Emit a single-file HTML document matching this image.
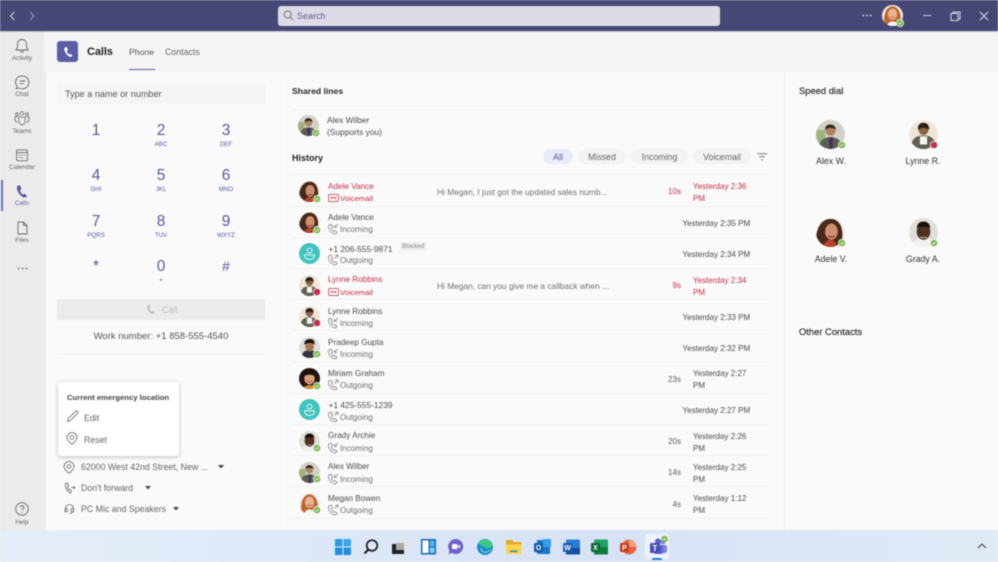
<!DOCTYPE html>
<html><head><meta charset="utf-8"><style>
html,body{margin:0;padding:0;width:998px;height:562px;overflow:hidden;background:#fafafa}
#r{position:relative;width:998px;height:562px;overflow:hidden;font-family:"Liberation Sans",sans-serif;color:#484644;filter:blur(.45px)}
#r div,#r svg{position:absolute}
.t{white-space:nowrap;line-height:12px;font-size:8.8px;height:12px;margin-top:1px}
.l{height:1px;background:#f2f2f2;left:292px;width:476px}
.n{font-size:8.2px;left:328px;color:#4c4c4c}
.s{font-size:8.1px;left:340px;color:#707070}
.s.red{font-size:7.7px}
.p{left:437px;font-size:8.35px;color:#707070}
.d{font-size:8.1px;width:30px;left:651px;text-align:right;color:#5c5c5c}
.y{left:682.5px;font-size:8.05px;color:#4c4c4c}
.y2{left:693px;font-size:8.05px;color:#4c4c4c}
.red{color:#c4314b}
.dg{font-size:15.5px;color:#5558a3;width:40px;text-align:center;line-height:18px;height:18px;margin-top:1px}
.lt{font-size:6.2px;color:#5558a3;width:40px;text-align:center;line-height:8px;height:8px;margin-top:1px}
.nav{font-size:6.4px;color:#666;width:44px;left:0;text-align:center;line-height:8px;height:8px;margin-top:1.5px}
.chip{height:15px;top:149px;border-radius:8px;background:#f3f3f3;font-size:8.8px;line-height:16px;text-align:center;color:#666}
.h{font-weight:bold;color:#252423;font-size:9px}
.sd{font-size:8.8px;width:70px;text-align:center;color:#333}
</style></head><body><div id="r">
<svg width="0" height="0" style="width:0;height:0"><defs>
<clipPath id="cc"><circle cx="16" cy="16" r="16"/></clipPath>
<symbol id="alex" viewBox="0 0 32 32"><g clip-path="url(#cc)"><rect width="32" height="32" fill="#cfd2c4"/><rect x="0" y="11" width="10" height="14" fill="#9fb27e"/><path d="M3 32c0-10 6-13 13-13s13 3 13 13z" fill="#5e5e58"/><path d="M14 19h5l-1 13h-3z" fill="#43325e"/><circle cx="16" cy="12" r="5.500" fill="#b08264"/><path d="M10 11c0-5 3-6 6-6s6 2 6 6c-3-3-9-3-12 0z" fill="#33261f"/></g></symbol>
<symbol id="adele" viewBox="0 0 32 32"><g clip-path="url(#cc)"><rect width="32" height="32" fill="#f5ece2"/><path d="M0 34C-2 12 6 1 16 1s14 10 13 20c0 5-2 9-4 13z" fill="#48291a"/><ellipse cx="17" cy="15" rx="7" ry="9" fill="#cd9070"/><path d="M8 32c1-6 5-8 8-8s6 2 8 8z" fill="#b5432c"/><path d="M13.500 20q3.500 2 7 0" stroke="#96333a" stroke-width="1.500" fill="none"/></g></symbol>
<symbol id="lynne" viewBox="0 0 32 32"><g clip-path="url(#cc)"><rect width="32" height="32" fill="#efe6d8"/><path d="M2 32c0-11 6-15 14-15s14 4 14 15z" fill="#5f5f54"/><path d="M12 18h8v10h-8z" fill="#f4f4f0"/><path d="M7 27h18v5H7z" fill="#5f5f54"/><circle cx="16" cy="11" r="5.500" fill="#8f6244"/><path d="M10 11c-1-6 3-8 6-8s7 2 6 8c-2-3-9-3-12 0z" fill="#2c2019"/></g></symbol>
<symbol id="pradeep" viewBox="0 0 32 32"><g clip-path="url(#cc)"><rect width="32" height="32" fill="#dedcd6"/><path d="M4 32c0-9 5-12 12-12s12 3 12 12z" fill="#33353a"/><ellipse cx="16" cy="14" rx="6.500" ry="8" fill="#a87350"/><path d="M8 12c0-7 4-9 9-9s7 3 7 9c-3-4-12-4-16 0z" fill="#15120f"/></g></symbol>
<symbol id="miriam" viewBox="0 0 32 32"><g clip-path="url(#cc)"><rect width="32" height="32" fill="#24160f"/><ellipse cx="16" cy="16" rx="8" ry="9" fill="#dba27c"/><path d="M6 14c1-8 6-10 10-10s9 3 10 10c-5-5-15-5-20 0z" fill="#1d120c"/><path d="M6 32c2-5 6-6 10-6s8 1 10 6z" fill="#d9903a"/><path d="M12.500 20q3.500 2 7 0" stroke="#b2423a" stroke-width="1.500" fill="none"/></g></symbol>
<symbol id="grady" viewBox="0 0 32 32"><g clip-path="url(#cc)"><rect width="32" height="32" fill="#dfdfda"/><path d="M4 32c0-8 5-10 12-10s12 2 12 10z" fill="#f0f0ee"/><ellipse cx="16" cy="15" rx="7.500" ry="9" fill="#4f3122"/><path d="M8.500 11c1-6 4-7 7.500-7s6.500 1 7.500 7c-4-2-11-2-15 0z" fill="#17100c"/><path d="M12.500 21q3.500 1.500 7 0" stroke="#e8d8d0" stroke-width="1" fill="none"/></g></symbol>
<symbol id="megan" viewBox="0 0 32 32"><g clip-path="url(#cc)"><rect width="32" height="32" fill="#f3efe8"/><path d="M4 30C1 14 7 2 16 2s15 12 12 28z" fill="#bd6530"/><ellipse cx="16" cy="14" rx="7" ry="8.500" fill="#e8b492"/><path d="M8 32c1-5 4-7 8-7s7 2 8 7z" fill="#f4f4f4"/><path d="M0 24l8 8H0z" fill="#eeb21e"/><path d="M12.500 18q3.500 2.500 7 0" stroke="#c0503c" stroke-width="1.300" fill="none"/></g></symbol>
<symbol id="tel" viewBox="0 0 32 32"><circle cx="16" cy="16" r="16" fill="#3fc4c0"/><circle cx="16" cy="11.500" r="3.700" fill="none" stroke="#fff" stroke-width="1.300"/><path d="M8.500 18h15c0 5-3 7-7.500 7s-7.500-2-7.500-7z" fill="none" stroke="#fff" stroke-width="1.300"/></symbol>
<symbol id="ok" viewBox="0 0 8 8"><circle cx="4" cy="4" r="4" fill="#fafafa"/><circle cx="4" cy="4" r="3.300" fill="#7fba50"/><path d="M2.500 4.100l1 1 2-2.100" stroke="#fff" stroke-width=".7" fill="none"/></symbol>
<symbol id="busy" viewBox="0 0 8 8"><circle cx="4" cy="4" r="4" fill="#fafafa"/><circle cx="4" cy="4" r="3.300" fill="#c4314b"/></symbol>
<symbol id="in" viewBox="0 0 12 12"><path d="M2.500 1.500C1 2.500 1 4 2.200 6.500S5.500 10.500 7.500 10.800c1.500.2 2.300-.6 2.500-1.600L7.800 7.600 6.600 8.300C5.400 7.500 4.600 6.200 4.300 4.800l1.200-.9L4.400 1.300z" fill="none" stroke="#858585" stroke-width=".8"/><path d="M11 1L7.500 4.500M7.500 2v2.500H10" fill="none" stroke="#858585" stroke-width=".8"/></symbol>
<symbol id="out" viewBox="0 0 12 12"><path d="M2.500 1.500C1 2.500 1 4 2.200 6.500S5.500 10.500 7.500 10.800c1.500.2 2.300-.6 2.500-1.600L7.800 7.600 6.600 8.300C5.400 7.500 4.600 6.200 4.300 4.800l1.200-.9L4.400 1.300z" fill="none" stroke="#858585" stroke-width=".8"/><path d="M7.500 4.500L11 1M8 1h3v3" fill="none" stroke="#858585" stroke-width=".8"/></symbol>
<symbol id="vm" viewBox="0 0 12 10"><rect x=".7" y="1.200" width="10.600" height="7.600" rx="1" fill="none" stroke="#c4314b" stroke-width=".8"/><path d="M3 4.200h6v1.800H7.500V5h-3v1H3z" fill="#c4314b"/></symbol>
<symbol id="ph" viewBox="0 0 16 16"><path d="M4.500 1.500C2.800 2.500 2.700 4.800 4.200 8s4 5.800 6.800 6.400c1.500.3 2.500-.5 2.900-1.700l-3-2.300-1.700.9C7.800 10.300 6.700 8.500 6.400 6.600l1.500-1.200L6.600 1.700z" fill="currentColor"/></symbol>
</defs></svg>

<!-- title bar -->
<div style="left:0;top:0;width:998px;height:31px;background:#464775"></div>
<div style="left:0;top:31px;width:998px;height:1px;background:#c8c8d8"></div>
<svg style="left:8px;top:11px" width="28" height="10" viewBox="0 0 28 10"><path d="M6.500 1L2.500 5l4 4" fill="none" stroke="#d8d8e8" stroke-width="1"/><path d="M22 1l4 4-4 4" fill="none" stroke="#9a9ab8" stroke-width="1"/></svg>
<div style="left:278px;top:6px;width:442px;height:20px;background:#dcdce6;border-radius:3px"></div>
<svg style="left:283px;top:10px" width="11" height="11" viewBox="0 0 11 11"><circle cx="4.700" cy="4.500" r="3.500" fill="none" stroke="#777" stroke-width="1"/><path d="M7.300 7.200l3 3" stroke="#777" stroke-width="1"/></svg>
<div class="t" style="left:297px;top:9px;font-size:9px;color:#5f5f90">Search</div>
<svg style="left:862px;top:14px" width="10" height="3"><circle cx="1.300" cy="1.500" r=".9" fill="#e8e8f0"/><circle cx="5" cy="1.500" r=".9" fill="#e8e8f0"/><circle cx="8.700" cy="1.500" r=".9" fill="#e8e8f0"/></svg>
<svg style="left:882px;top:5px" width="22" height="22"><use href="#megan" width="21" height="21"/></svg>
<svg style="left:896px;top:19px" width="8" height="8"><use href="#ok" width="8" height="8"/></svg>
<svg style="left:922px;top:11px" width="68" height="11" viewBox="0 0 68 11"><path d="M1 4.500h8.500" stroke="#c8c8dc" stroke-width="1"/><rect x="29" y="2.500" width="7" height="7" fill="none" stroke="#d8d8e8" stroke-width="1"/><path d="M31 2V1h7v7h-1.500" fill="none" stroke="#d8d8e8" stroke-width="1"/><path d="M58 1l8 8M66 1l-8 8" stroke="#d8d8e8" stroke-width="1"/></svg>

<!-- sidebar -->
<div style="left:0;top:32px;width:44px;height:498px;background:#ebebeb;box-shadow:1px 0 3px rgba(0,0,0,.1)"></div>
<div style="left:1px;top:180px;width:2px;height:31px;background:#7174b4"></div>
<svg style="left:14px;top:38px" width="16" height="16" viewBox="0 0 16 16" fill="none" stroke="#666" stroke-width=".9"><path d="M8 1.500c-3 0-4.500 2-4.500 4.500v3L2 12h12l-1.500-3V6c0-2.500-1.500-4.500-4.500-4.500zM6.300 13c.3 1.400 3.100 1.400 3.400 0"/></svg>
<div class="nav" style="top:53px">Activity</div>
<svg style="left:15px;top:75px" width="15" height="15" viewBox="0 0 15 15" fill="none" stroke="#666" stroke-width=".9"><path d="M7.500 1A6.300 6.300 0 0 1 7.500 13.800C6 13.800 4.800 13.500 3.800 13L1.200 13.700 2 11.200A6.300 6.300 0 0 1 7.500 1zM4.800 6h5.600M4.800 8.600h3.600"/></svg>
<div class="nav" style="top:89px">Chat</div>
<svg style="left:14px;top:111px" width="16" height="14" viewBox="0 0 16 14" fill="none" stroke="#666" stroke-width=".8"><circle cx="8" cy="2.200" r="1.700"/><circle cx="3" cy="3.200" r="1.400"/><circle cx="13" cy="3.200" r="1.400"/><path d="M4.800 6h6.400v4.500a3.200 3.200 0 0 1-6.400 0zM3.500 6H1v3c0 1.300 1 2.200 2.500 2.200M12.500 6H15v3c0 1.300-1 2.200-2.500 2.200"/></svg>
<div class="nav" style="top:126px">Teams</div>
<svg style="left:16px;top:149px" width="12" height="13" viewBox="0 0 12 13" fill="none" stroke="#666" stroke-width=".9"><rect x=".6" y=".8" width="10.800" height="11" rx="1.200"/><path d="M.6 3.600h10.800"/><path d="M3 6.300h1.200M5.400 6.300h1.200M7.800 6.300H9M3 8.600h1.200M5.400 8.600h1.200" stroke-width="1"/></svg>
<div class="nav" style="top:162px">Calendar</div>
<svg style="left:14px;top:184px;color:#5558a3" width="15" height="15"><use href="#ph" width="15" height="15"/></svg>
<div class="nav" style="top:198px;color:#6264a7">Calls</div>
<svg style="left:17px;top:221px" width="11" height="14" viewBox="0 0 11 14" fill="none" stroke="#666" stroke-width=".9"><path d="M1 1h5.500L10 4.500V13H1zM6.500 1v3.500H10"/></svg>
<div class="nav" style="top:235px">Files</div>
<svg style="left:17px;top:267px" width="11" height="3"><circle cx="1.500" cy="1.500" r=".9" fill="#666"/><circle cx="5.500" cy="1.500" r=".9" fill="#666"/><circle cx="9.500" cy="1.500" r=".9" fill="#666"/></svg>
<svg style="left:15px;top:502px" width="14" height="14" viewBox="0 0 14 14" fill="none" stroke="#666" stroke-width=".9"><circle cx="7" cy="7" r="6.300"/><path d="M5.200 5.400c0-2.300 3.700-2.300 3.700 0 0 1.500-1.900 1.500-1.900 3M7 10v.9"/></svg>
<div class="nav" style="top:517px">Help</div>

<!-- header -->
<div style="left:44px;top:32px;width:954px;height:40px;background:#f5f5f5"></div>
<div style="left:57px;top:41px;width:21px;height:21px;background:#5b5ea6;border-radius:3px"></div>
<svg style="left:62px;top:46px;color:#fff" width="12" height="12"><use href="#ph" width="12" height="12"/></svg>
<div class="t" style="left:87px;top:45px;font-size:11px;letter-spacing:-.1px;font-weight:bold;color:#252423">Calls</div>
<div class="t" style="left:129px;top:45px;font-size:8.7px;color:#555">Phone</div>
<div class="t" style="left:165px;top:45px;font-size:8.8px;color:#666">Contacts</div>
<div style="left:129px;top:69px;width:25.500px;height:1px;background:#5b5ea6"></div>

<!-- dial -->
<div style="left:57px;top:83px;width:208px;height:21px;background:#f5f5f5"></div>
<div class="t" style="left:65px;top:87px;font-size:9.100px;color:#555">Type a name or number</div>
<div class="dg" style="left:76px;top:121px">1</div>
<div class="dg" style="left:141px;top:121px">2</div><div class="lt" style="left:141px;top:140px">ABC</div>
<div class="dg" style="left:206px;top:121px">3</div><div class="lt" style="left:206px;top:140px">DEF</div>
<div class="dg" style="left:76px;top:166px">4</div><div class="lt" style="left:76px;top:185px">GHI</div>
<div class="dg" style="left:141px;top:166px">5</div><div class="lt" style="left:141px;top:185px">JKL</div>
<div class="dg" style="left:206px;top:166px">6</div><div class="lt" style="left:206px;top:185px">MNO</div>
<div class="dg" style="left:76px;top:212px">7</div><div class="lt" style="left:76px;top:231px">PQRS</div>
<div class="dg" style="left:141px;top:212px">8</div><div class="lt" style="left:141px;top:231px">TUV</div>
<div class="dg" style="left:206px;top:212px">9</div><div class="lt" style="left:206px;top:231px">WXYZ</div>
<div class="dg" style="left:76px;top:257px">*</div>
<div class="dg" style="left:141px;top:257px">0</div><div class="lt" style="left:141px;top:276px">+</div>
<div class="dg" style="left:206px;top:256px;font-size:14px">#</div>

<div style="left:57px;top:299px;width:208px;height:21px;background:#ebebeb"></div>
<svg style="left:145px;top:304px;color:#bdbdbd" width="11" height="11"><use href="#ph" width="11" height="11"/></svg>
<div class="t" style="left:162px;top:303px;font-size:9px;color:#bdbdbd">Call</div>
<div class="t" style="left:57px;width:208px;text-align:center;top:330px;font-size:9.500px;color:#555">Work number: +1 858-555-4540</div>
<div style="left:57px;top:354px;width:208px;height:1px;background:#f0f0f0"></div>

<!-- popup -->
<div style="left:58px;top:382px;width:121px;height:74px;background:#fff;border-radius:3px;box-shadow:0 1px 4px rgba(0,0,0,.25)"></div>
<div class="t" style="left:67px;top:390.5px;font-size:7.700px;font-weight:bold;color:#444">Current emergency location</div>
<svg style="left:66px;top:410px" width="13" height="13" viewBox="0 0 13 13" fill="none" stroke="#666" stroke-width=".8"><path d="M1.500 11.500l.8-3L9.500 1.300c.6-.6 1.400-.6 2 0s.6 1.400 0 2L4.400 10.500z"/></svg>
<div class="t" style="left:84px;top:410.5px;font-size:8.800px;color:#666">Edit</div>
<svg style="left:66px;top:432px" width="12" height="13" viewBox="0 0 12 13" fill="none" stroke="#666" stroke-width=".8"><path d="M6 12.300C3 10 1 8 1 5.500a5 5 0 0 1 10 0C11 8 9 10 6 12.300z"/><circle cx="6" cy="5.500" r="1.900"/></svg>
<div class="t" style="left:84px;top:432.5px;font-size:8.800px;color:#666">Reset</div>

<svg style="left:63px;top:461px" width="12" height="13" viewBox="0 0 12 13" fill="none" stroke="#666" stroke-width=".8"><path d="M6 12.300C3 10 1 8 1 5.500a5 5 0 0 1 10 0C11 8 9 10 6 12.300z"/><circle cx="6" cy="5.500" r="1.900"/></svg>
<div class="t" style="left:81px;top:460px;font-size:8.800px;color:#666">62000 West 42nd Street, New ...</div>
<svg style="left:218px;top:465px" width="6" height="4"><path d="M0 0h6L3 3.500z" fill="#444"/></svg>
<svg style="left:64px;top:482px" width="12" height="12" viewBox="0 0 12 12" fill="none" stroke="#666" stroke-width=".8"><path d="M2.500 1C1 2 1 3.800 2 6.200s3 4.500 4.500 4.800l1-2-1.700-1.500-.9.500C4.200 7 3.700 5.800 3.600 4.800l1-.7L3.800 1.300zM7 5.500h4M9.500 4l1.500 1.500L9.500 7"/></svg>
<div class="t" style="left:81px;top:481px;font-size:8.800px;color:#666">Don't forward</div>
<svg style="left:145px;top:486px" width="6" height="4"><path d="M0 0h6L3 3.500z" fill="#444"/></svg>
<svg style="left:64px;top:503px" width="11" height="12" viewBox="0 0 11 12" fill="none" stroke="#666" stroke-width=".8"><path d="M1.500 9V5.500a4 4 0 0 1 8 0V7c0 2-2 3.500-4 3.500"/><rect x="1" y="5.500" width="2.500" height="3.500" rx="1"/><rect x="7" y="5.500" width="2.500" height="3.500" rx="1"/></svg>
<div class="t" style="left:81px;top:502px;font-size:8.800px;color:#666">PC Mic and Speakers</div>
<svg style="left:173px;top:507px" width="6" height="4"><path d="M0 0h6L3 3.500z" fill="#444"/></svg>

<!-- middle -->
<div style="left:279px;top:72px;width:1px;height:458px;background:#f5f5f5"></div>
<div class="t h" style="left:292px;top:84px;font-size:8.600px">Shared lines</div>
<div class="l" style="top:109px"></div>
<svg style="left:298px;top:115px" width="21" height="21"><use href="#alex" width="21" height="21"/></svg>
<svg style="left:312px;top:129px" width="8" height="8"><use href="#ok" width="8" height="8"/></svg>
<div class="t n" style="left:327px;top:113px;font-size:8.400px">Alex Wilber</div>
<div class="t n" style="left:327px;top:125px;font-size:8.400px">(Supports you)</div>
<div class="t h" style="left:292px;top:150.5px">History</div>
<div class="chip" style="left:543px;width:30px;background:#e8ebfa;color:#5558a3">All</div>
<div class="chip" style="left:578px;width:48px">Missed</div>
<div class="chip" style="left:631px;width:57px">Incoming</div>
<div class="chip" style="left:693px;width:58px">Voicemail</div>
<svg style="left:757px;top:153px" width="10" height="8" viewBox="0 0 10 8" stroke="#666" stroke-width=".8"><path d="M0 .7h10M2 3.700h6M4 6.700h2"/></svg>

<div class="l" style="top:174px"></div>
<div class="l" style="top:206px"></div>
<div class="l" style="top:237px"></div>
<div class="l" style="top:268px"></div>
<div class="l" style="top:299px"></div>
<div class="l" style="top:330px"></div>
<div class="l" style="top:362px"></div>
<div class="l" style="top:393px"></div>
<div class="l" style="top:424px"></div>
<div class="l" style="top:455px"></div>
<div class="l" style="top:486px"></div>
<div class="l" style="top:518px"></div>

<!-- row 1 -->
<svg style="left:299px;top:181px" width="21" height="21"><use href="#adele" width="21" height="21"/></svg><svg style="left:313px;top:195px" width="8" height="8"><use href="#ok" width="8" height="8"/></svg>
<div class="t n red" style="top:180px">Adele Vance</div><svg style="left:328px;top:193px" width="11" height="10"><use href="#vm" width="11" height="10"/></svg><div class="t s red" style="top:192px">Voicemail</div>
<div class="t p" style="top:185px">Hi Megan, I just got the updated sales numb...</div>
<div class="t d red" style="top:185px">10s</div><div class="t y2 red" style="top:180px">Yesterday 2:36</div><div class="t y2 red" style="top:192px">PM</div>
<!-- row 2 -->
<svg style="left:299px;top:212px" width="21" height="21"><use href="#adele" width="21" height="21"/></svg><svg style="left:313px;top:226px" width="8" height="8"><use href="#ok" width="8" height="8"/></svg>
<div class="t n" style="top:211px">Adele Vance</div><svg style="left:327px;top:223px" width="12" height="12"><use href="#in" width="12" height="12"/></svg><div class="t s" style="top:223px">Incoming</div>
<div class="t y" style="top:217px">Yesterday 2:35 PM</div>
<!-- row 3 -->
<svg style="left:299px;top:243px" width="22" height="22"><use href="#tel" width="21" height="21"/></svg>
<div class="t n" style="top:242px;left:328.500px;font-size:8.400px">+1 206-555-9871</div><div style="left:400px;top:242px;width:27px;height:9px;background:#f0f0f0;border-radius:1px"></div><div class="t" style="left:402px;top:240px;font-size:6.300px;color:#888">Blocked</div>
<svg style="left:327px;top:254px" width="12" height="12"><use href="#out" width="12" height="12"/></svg><div class="t s" style="top:254px">Outgoing</div>
<div class="t y" style="top:248px">Yesterday 2:34 PM</div>
<!-- row 4 -->
<svg style="left:299px;top:275px" width="21" height="21"><use href="#lynne" width="21" height="21"/></svg><svg style="left:313px;top:288px" width="8" height="8"><use href="#busy" width="8" height="8"/></svg>
<div class="t n red" style="top:273px">Lynne Robbins</div><svg style="left:328px;top:287px" width="11" height="10"><use href="#vm" width="11" height="10"/></svg><div class="t s red" style="top:286px">Voicemail</div>
<div class="t p" style="top:279px">Hi Megan, can you give me a callback when ...</div>
<div class="t d red" style="top:279px">9s</div><div class="t y2 red" style="top:274px">Yesterday 2:34</div><div class="t y2 red" style="top:286px">PM</div>
<!-- row 5 -->
<svg style="left:299px;top:306px" width="21" height="21"><use href="#lynne" width="21" height="21"/></svg><svg style="left:313px;top:319px" width="8" height="8"><use href="#busy" width="8" height="8"/></svg>
<div class="t n" style="top:305px">Lynne Robbins</div><svg style="left:327px;top:317px" width="12" height="12"><use href="#in" width="12" height="12"/></svg><div class="t s" style="top:317px">Incoming</div>
<div class="t y" style="top:311px">Yesterday 2:33 PM</div>
<!-- row 6 -->
<svg style="left:299px;top:337px" width="21" height="21"><use href="#pradeep" width="21" height="21"/></svg><svg style="left:313px;top:350px" width="8" height="8"><use href="#ok" width="8" height="8"/></svg>
<div class="t n" style="top:336px">Pradeep Gupta</div><svg style="left:327px;top:348px" width="12" height="12"><use href="#in" width="12" height="12"/></svg><div class="t s" style="top:348px">Incoming</div>
<div class="t y" style="top:342px">Yesterday 2:32 PM</div>
<!-- row 7 -->
<svg style="left:299px;top:368px" width="21" height="21"><use href="#miriam" width="21" height="21"/></svg><svg style="left:313px;top:382px" width="8" height="8"><use href="#ok" width="8" height="8"/></svg>
<div class="t n" style="top:367px">Miriam Graham</div><svg style="left:327px;top:379px" width="12" height="12"><use href="#out" width="12" height="12"/></svg><div class="t s" style="top:379px">Outgoing</div>
<div class="t d" style="top:373px">23s</div><div class="t y2" style="top:367px">Yesterday 2:27</div><div class="t y2" style="top:379px">PM</div>
<!-- row 8 -->
<svg style="left:299px;top:399px" width="22" height="22"><use href="#tel" width="21" height="21"/></svg>
<div class="t n" style="top:398px;left:328.500px;font-size:8.400px">+1 425-555-1239</div><svg style="left:327px;top:411px" width="12" height="12"><use href="#out" width="12" height="12"/></svg><div class="t s" style="top:411px">Outgoing</div>
<div class="t y" style="top:404px">Yesterday 2:27 PM</div>
<!-- row 9 -->
<svg style="left:299px;top:431px" width="21" height="21"><use href="#grady" width="21" height="21"/></svg><svg style="left:313px;top:444px" width="8" height="8"><use href="#ok" width="8" height="8"/></svg>
<div class="t n" style="top:429px">Grady Archie</div><svg style="left:327px;top:442px" width="12" height="12"><use href="#in" width="12" height="12"/></svg><div class="t s" style="top:442px">Incoming</div>
<div class="t d" style="top:435px">20s</div><div class="t y2" style="top:430px">Yesterday 2:26</div><div class="t y2" style="top:442px">PM</div>
<!-- row 10 -->
<svg style="left:299px;top:462px" width="21" height="21"><use href="#alex" width="21" height="21"/></svg><svg style="left:313px;top:475px" width="8" height="8"><use href="#ok" width="8" height="8"/></svg>
<div class="t n" style="top:460px">Alex Wilber</div><svg style="left:327px;top:473px" width="12" height="12"><use href="#in" width="12" height="12"/></svg><div class="t s" style="top:473px">Incoming</div>
<div class="t d" style="top:466px">14s</div><div class="t y2" style="top:461px">Yesterday 2:25</div><div class="t y2" style="top:473px">PM</div>
<!-- row 11 -->
<svg style="left:299px;top:493px" width="21" height="21"><use href="#megan" width="21" height="21"/></svg><svg style="left:313px;top:506px" width="8" height="8"><use href="#ok" width="8" height="8"/></svg>
<div class="t n" style="top:492px">Megan Bowen</div><svg style="left:327px;top:504px" width="12" height="12"><use href="#out" width="12" height="12"/></svg><div class="t s" style="top:504px">Outgoing</div>
<div class="t d" style="top:498px">4s</div><div class="t y2" style="top:492px">Yesterday 1:12</div><div class="t y2" style="top:504px">PM</div>

<!-- right -->
<div style="left:784px;top:72px;width:1px;height:458px;background:#f0f0f0"></div>
<div class="t h" style="left:799px;top:83.5px;font-size:9.400px;font-weight:normal;color:#333;-webkit-text-stroke:.2px #333">Speed dial</div>
<svg style="left:816px;top:120px" width="29" height="29"><use href="#alex" width="29" height="29"/></svg><svg style="left:838px;top:141px" width="8" height="8"><use href="#ok" width="8" height="8"/></svg>
<svg style="left:909px;top:120px" width="29" height="29"><use href="#lynne" width="29" height="29"/></svg><svg style="left:930px;top:141px" width="8" height="8"><use href="#busy" width="8" height="8"/></svg>
<svg style="left:816px;top:218px" width="29" height="29"><use href="#adele" width="29" height="29"/></svg><svg style="left:838px;top:239px" width="8" height="8"><use href="#ok" width="8" height="8"/></svg>
<svg style="left:909px;top:218px" width="29" height="29"><use href="#grady" width="29" height="29"/></svg><svg style="left:930px;top:239px" width="8" height="8"><use href="#ok" width="8" height="8"/></svg>
<div class="t sd" style="left:796px;top:153.5px">Alex W.</div>
<div class="t sd" style="left:888px;top:153.5px">Lynne R.</div>
<div class="t sd" style="left:796px;top:251.5px">Adele V.</div>
<div class="t sd" style="left:888px;top:251.5px">Grady A.</div>
<div class="t h" style="left:799px;top:324.5px;font-size:9.400px;font-weight:normal;color:#333;-webkit-text-stroke:.2px #333">Other Contacts</div>

<!-- taskbar -->
<div style="left:0;top:530px;width:998px;height:32px;background:linear-gradient(90deg,#e6eef8 0,#dde8f8 30%,#d8e2f6 60%,#e0eaf6 100%)"></div>
<div style="left:645px;top:534px;width:24px;height:25px;background:#eef2fb;border-radius:3px"></div>
<div style="left:652px;top:558px;width:10px;height:1.500px;background:#1f7fd0;border-radius:1px"></div>
<svg style="left:330px;top:534px" width="340" height="26" viewBox="0 0 340 26">
<g fill="#2a9ce8"><rect x="5" y="5" width="7.500" height="7.500"/><rect x="13.500" y="5" width="7.500" height="7.500" fill="#3aa8ee"/><rect x="5" y="13.500" width="7.500" height="7.500" fill="#1f8fdf"/><rect x="13.500" y="13.500" width="7.500" height="7.500" fill="#1f8fdf"/></g>
<circle cx="42" cy="11.500" r="5.300" fill="none" stroke="#1a1a1a" stroke-width="1.700"/><path d="M38.300 15.500L34.500 19.500" stroke="#1a1a1a" stroke-width="2"/>
<rect x="62" y="10" width="12" height="10" fill="#222"/><rect x="68" y="5" width="10" height="11" fill="#e4e4e4" opacity=".95"/><rect x="66" y="9" width="8" height="7" fill="#aaa"/>
<rect x="91" y="5" width="15" height="15.500" fill="#1769b8"/><rect x="92.500" y="6.500" width="6" height="12.500" fill="#fff"/><rect x="99.800" y="6.500" width="4.800" height="6" fill="#4fb3ea"/><rect x="99.800" y="13.500" width="4.800" height="5.500" fill="#7fcdf2"/>
<path d="M126 5a7.500 7.500 0 1 1-4 14l-3.500 1 1-3.300A7.500 7.500 0 0 1 126 5z" fill="#6e64c8"/><rect x="122" y="10" width="5.500" height="5" rx="1" fill="#fff"/><path d="M128 12l2-1.500v4l-2-1.500z" fill="#fff"/>
<circle cx="155" cy="13" r="8" fill="#1590c8"/><path d="M148 10c2-5 8-6 12-3s3 7-1 7-4-1-6-2-4-2-5-2z" fill="#3ccb86"/><path d="M151 14c0 3 3 5 6 4s3-2 4-2" fill="none" stroke="#fff" stroke-width=".8" opacity=".7"/>
<path d="M176 6h6l1.500 2h8v12h-15.500z" fill="#e8a820"/><rect x="176" y="10.500" width="15.500" height="9.500" fill="#fbd44a"/><rect x="180" y="16.500" width="7.500" height="1.500" fill="#2a88c8"/>
<rect x="207" y="6" width="13" height="14" fill="#1b76c8"/><rect x="213" y="5" width="8" height="8" fill="#33a0e8"/><rect x="204" y="9" width="9" height="9" rx="1" fill="#0f5da8"/><text x="208.500" y="16" font-size="7" font-family="Liberation Sans" font-weight="bold" fill="#fff" text-anchor="middle">O</text>
<rect x="236" y="5.500" width="14" height="15" rx="1" fill="#2b7cd3"/><rect x="236" y="14" width="14" height="6.500" fill="#134fa0"/><rect x="233" y="9" width="9" height="9" rx="1" fill="#1a5cb0"/><text x="237.500" y="16" font-size="7" font-family="Liberation Sans" font-weight="bold" fill="#fff" text-anchor="middle">W</text>
<rect x="264" y="5.500" width="14" height="15" rx="1" fill="#21a366"/><rect x="264" y="13" width="14" height="7.500" fill="#107c41"/><rect x="261" y="9" width="9" height="9" rx="1" fill="#0d6a36"/><text x="265.500" y="16" font-size="7" font-family="Liberation Sans" font-weight="bold" fill="#fff" text-anchor="middle">X</text>
<circle cx="299" cy="13" r="7.500" fill="#e8623c"/><path d="M299 5.500a7.500 7.500 0 0 1 7.500 7.500H299z" fill="#f4a078"/><rect x="290" y="9" width="9" height="9" rx="1" fill="#c43e1c"/><text x="294.500" y="16" font-size="7" font-family="Liberation Sans" font-weight="bold" fill="#fff" text-anchor="middle">P</text>
<circle cx="333" cy="8" r="2.500" fill="#7b83eb"/><rect x="330" y="11" width="7" height="8" rx="2" fill="#7b83eb"/><circle cx="328" cy="7.500" r="3" fill="#5b5fc7"/><rect x="324" y="11" width="9" height="9" rx="2" fill="#6264c8"/><rect x="320" y="9" width="10" height="10" rx="1" fill="#464eb8"/><text x="325" y="17" font-size="8" font-family="Liberation Sans" font-weight="bold" fill="#fff" text-anchor="middle">T</text>
<circle cx="334.500" cy="5" r="3.300" fill="#7fba50"/><path d="M333 5l1 1 2-2" stroke="#fff" stroke-width=".7" fill="none"/>
</svg>
<svg style="left:977px;top:543px" width="10" height="6"><path d="M1 5l4-4 4 4" fill="none" stroke="#333" stroke-width=".9"/></svg>
</div></body></html>
